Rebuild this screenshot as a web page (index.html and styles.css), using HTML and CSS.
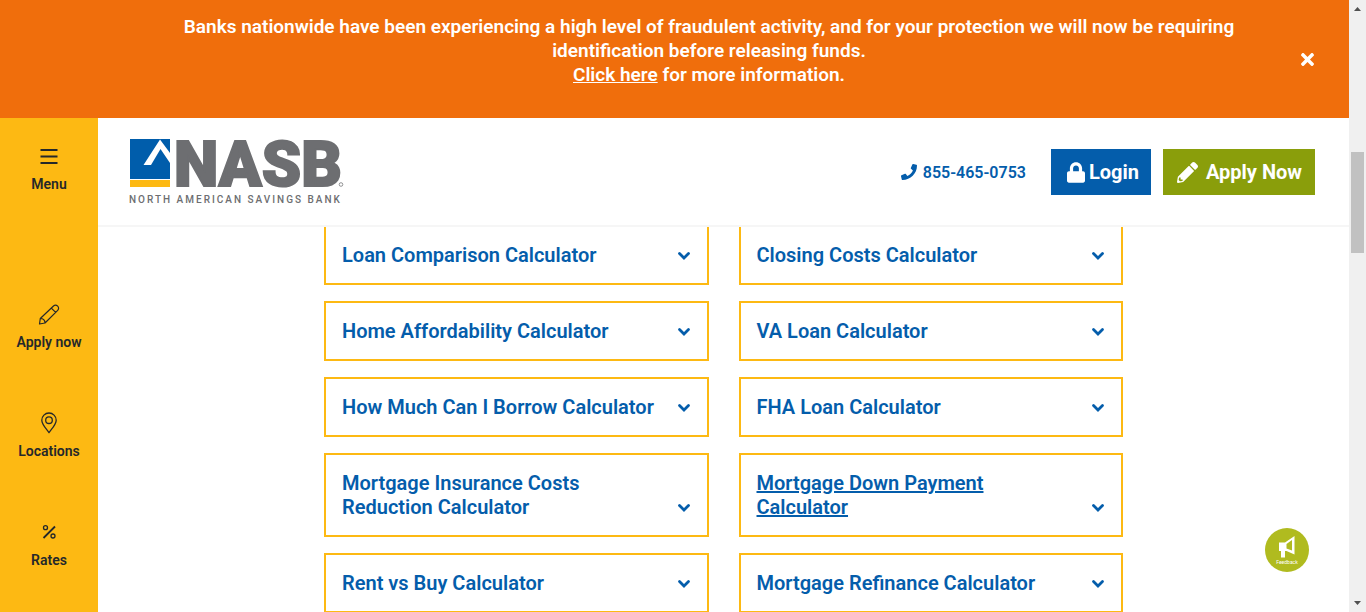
FILE: index.html
```html
<!DOCTYPE html>
<html lang="en">
<head>
<meta charset="utf-8">
<title>Mortgage Calculators | NASB</title>
<link rel="stylesheet" href="styles.css">
</head>
<body>
<svg class="sprite" aria-hidden="true">
  <symbol id="chevron" viewBox="0 0 14 10"><path d="M2.5 2.5 7 7l4.500-4.500" fill="none" stroke="currentColor" stroke-width="2.800" stroke-linecap="round" stroke-linejoin="miter"/></symbol>
</svg>
<div class="app">
  <div class="banner" role="alert">
    <p class="banner-text">Banks nationwide have been experiencing a high level of fraudulent activity, and for your protection we will now be requiring identification before releasing funds.<br><a href="#info">Click here</a> for more information.</p>
    <button class="banner-close" type="button" aria-label="Close">
      <svg width="13" height="19" viewBox="0 0 352 512" fill="currentColor"><path d="M242.720 256l100.070-100.070c12.280-12.280 12.280-32.190 0-44.480l-22.240-22.240c-12.280-12.280-32.190-12.280-44.480 0L176 189.280 75.930 89.210c-12.280-12.280-32.190-12.280-44.480 0L9.210 111.450c-12.280 12.280-12.280 32.190 0 44.480L109.280 256 9.210 356.070c-12.280 12.280-12.280 32.190 0 44.480l22.240 22.240c12.280 12.280 32.200 12.280 44.480 0L176 322.720l100.070 100.070c12.280 12.280 32.200 12.280 44.480 0l22.240-22.240c12.280-12.280 12.280-32.190 0-44.480L242.720 256z"/></svg>
    </button>
  </div>
  <div class="body">
    <nav class="sidebar" aria-label="Quick links">
      <button class="side-item side-menu" type="button">
        <svg width="24" height="24" viewBox="0 0 24 24" fill="none" stroke="currentColor" stroke-width="2"><path d="M3.500 6h17M3.500 12.500h17M3.500 19h17"/></svg>
        <span>Menu</span>
      </button>
      <a class="side-item" href="#apply">
        <svg width="24" height="24" viewBox="0 0 24 24" fill="none" stroke="currentColor" stroke-width="1.200" stroke-linejoin="round"><path d="M2.500 22l.8-5.500L16.500 4c1.200-1.100 3-1 4.200.2s1.200 2.900 0 4.100L8 21zM14.300 6.100l4.400 4.300M3.300 16.500c2.600 0 4.600 1.900 4.700 4.500"/></svg>
        <span>Apply now</span>
      </a>
      <a class="side-item" href="#locations">
        <svg width="24" height="24" viewBox="0 0 24 24" fill="none" stroke="currentColor" stroke-width="1.300"><path d="M12 21.500c-2.400-3.300-7.200-8-7.200-12.300a7.200 7.200 0 0 1 14.400 0c0 4.300-4.800 9-7.200 12.300z"/><circle cx="12" cy="9.200" r="3.300"/></svg>
        <span>Locations</span>
      </a>
      <a class="side-item" href="#rates">
        <svg width="24" height="24" viewBox="0 0 24 24" fill="none" stroke="currentColor"><path d="M6.500 18 18 6.500" stroke-width="1.800"/><circle cx="8.500" cy="7.700" r="2" stroke-width="1.300"/><circle cx="16" cy="16" r="2" stroke-width="1.300"/></svg>
        <span>Rates</span>
      </a>
    </nav>
    <div class="main">
      <header class="header">
        <a class="logo" href="#home" aria-label="NASB North American Savings Bank">
          <svg width="216" height="68" viewBox="0 0 216 68">
            <path fill="#005dab" d="M0 1h40v40H0z"/>
            <path fill="#fdb913" d="M0 42h40v7H0z"/>
            <path fill="#fff" d="M30 1.500 40 15v10L30.500 11 21 27h-7.500z"/>
            <text class="logo-name" x="44" y="48">NASB</text>
            <circle cx="211" cy="46.500" r="1.800" fill="none" stroke="#77787b" stroke-width=".8"/>
            <text class="logo-tag" x="-1" y="65">NORTH AMERICAN SAVINGS BANK</text>
          </svg>
        </a>
        <div class="actions">
          <a class="phone" href="tel:8554650753">
            <svg width="16" height="16" viewBox="0 0 512 512" fill="currentColor"><path d="M493.400 24.600l-104-24c-11.300-2.600-22.900 3.300-27.500 13.900l-48 112c-4.200 9.800-1.400 21.300 6.900 28l60.600 49.600c-36 76.700-98.900 140.500-177.200 177.200l-49.600-60.600c-6.800-8.300-18.200-11.100-28-6.900l-112 48C3.900 366.500-2 378.100.6 389.400l24 104C27.100 504.200 36.700 512 48 512c256.100 0 464-207.500 464-464 0-11.200-7.700-20.900-18.600-23.400z"/></svg>
            855-465-0753
          </a>
          <button class="btn btn-login" type="button">
            <svg width="18" height="21" viewBox="0 0 448 512" fill="currentColor"><path d="M400 224h-24v-72C376 68.200 307.800 0 224 0S72 68.200 72 152v72H48c-26.500 0-48 21.500-48 48v192c0 26.500 21.500 48 48 48h352c26.500 0 48-21.500 48-48V272c0-26.500-21.500-48-48-48zm-104 0H152v-72c0-39.700 32.300-72 72-72s72 32.300 72 72v72z"/></svg>
            Login
          </button>
          <a class="btn btn-apply" href="#apply">
            <svg width="21" height="21" viewBox="0 0 512 512" fill="currentColor"><path d="M497.900 142.100l-46.100 46.100c-4.700 4.700-12.300 4.700-17 0l-111-111c-4.700-4.700-4.700-12.300 0-17l46.100-46.100c18.700-18.700 49.100-18.700 67.900 0l60.100 60.100c18.800 18.700 18.800 49.100 0 67.900zM284.200 99.800L21.600 362.400.4 483.900c-2.900 16.400 11.400 30.600 27.800 27.800l121.500-21.300 262.600-262.600c4.700-4.700 4.700-12.300 0-17l-111-111c-4.800-4.700-12.400-4.700-17.100 0zM88 424h48v36.300l-64.500 11.300-31.100-31.100L51.700 376H88v48z"/></svg>
            Apply Now
          </a>
        </div>
      </header>
      <main class="content">
        <div class="cards">
          <button class="card" type="button"><span>Loan Comparison Calculator</span><svg><use href="#chevron"/></svg></button>
          <button class="card" type="button"><span>Closing Costs Calculator</span><svg><use href="#chevron"/></svg></button>
          <button class="card" type="button"><span>Home Affordability Calculator</span><svg><use href="#chevron"/></svg></button>
          <button class="card" type="button"><span>VA Loan Calculator</span><svg><use href="#chevron"/></svg></button>
          <button class="card" type="button"><span>How Much Can I Borrow Calculator</span><svg><use href="#chevron"/></svg></button>
          <button class="card" type="button"><span>FHA Loan Calculator</span><svg><use href="#chevron"/></svg></button>
          <button class="card" type="button"><span>Mortgage Insurance Costs Reduction Calculator</span><svg><use href="#chevron"/></svg></button>
          <button class="card card-active" type="button"><span>Mortgage Down Payment Calculator</span><svg><use href="#chevron"/></svg></button>
          <button class="card" type="button"><span>Rent vs Buy Calculator</span><svg><use href="#chevron"/></svg></button>
          <button class="card" type="button"><span>Mortgage Refinance Calculator</span><svg><use href="#chevron"/></svg></button>
        </div>
      </main>
    </div>
  </div>
</div>
<div class="scrollbar" aria-hidden="true">
  <svg width="17" height="17" viewBox="0 0 17 17"><path fill="#505050" d="M5 11l3.500-4 3.500 4z"/></svg>
  <div class="track"><div class="thumb"></div></div>
  <svg width="17" height="17" viewBox="0 0 17 17"><path fill="#505050" d="M5 6l3.500 4L12 6z"/></svg>
</div>
<button class="feedback" type="button">
  <svg width="18" height="24" viewBox="0 0 18 24"><path fill="#fff" d="M1 7.500h6L16.500 1v18.500L8.500 16H7v6.500H3V16H1z"/><path fill="#b0bb1f" d="M8.500 9l5.500-4v10.500L8.500 13.500z"/></svg>
  <span>Feedback</span>
</button>
</body>
</html>
```
FILE: styles.css
```css
* { box-sizing: border-box; }
body {
  margin: 0;
  height: 100vh;
  display: grid;
  grid-template-columns: minmax(0, 1fr) 17px;
  overflow: hidden;
  background: #fff;
  font-family: Roboto, "Liberation Sans", sans-serif;
}
button { font: inherit; border: 0; background: none; cursor: pointer; padding: 0; }
a { color: inherit; text-decoration: none; }
.sprite { display: none; }

.app { display: flex; flex-direction: column; height: 100vh; }
.banner {
  display: flex;
  align-items: center;
  background: #f06e0c;
  color: #fff;
  padding: 15px 35px 31px 117px;
}
.banner-text {
  flex: 1;
  margin: 0;
  padding: 0 56px;
  text-align: center;
  font-size: 19px;
  font-weight: 600;
  line-height: 24px;
}
.banner-text a { text-decoration: underline; }
.banner-close { display: flex; color: #fff; padding-top: 16px; }

.body { flex: 1; min-height: 0; display: flex; }
.sidebar {
  width: 98px;
  flex-shrink: 0;
  background: #fdb913;
  color: #25282a;
  display: flex;
  flex-direction: column;
  gap: 61px;
  padding-top: 26px;
}
.side-item {
  display: flex;
  flex-direction: column;
  align-items: center;
  gap: 8px;
  flex-shrink: 0;
  font-size: 14px;
  font-weight: 600;
  line-height: 16px;
  color: inherit;
}
.side-menu { margin-bottom: 49px; }

.main { flex: 1; min-width: 0; display: flex; flex-direction: column; }
.header {
  position: relative;
  z-index: 1;
  display: flex;
  justify-content: space-between;
  align-items: center;
  background: #fff;
  border-bottom: 2px solid #f6f6f6;
  padding: 20px 34px 19px 32px;
}
.logo svg { display: block; overflow: visible; }
.logo-name {
  font-family: Roboto, sans-serif;
  font-size: 63px;
  font-weight: 900;
  fill: #6d6e71;
  stroke: #6d6e71;
  stroke-width: 2px;
}
.logo-tag { font-family: Roboto, sans-serif; font-size: 10px; font-weight: 500; letter-spacing: 2px; fill: #6d6e71; }
.actions { display: flex; align-items: center; gap: 12px; }
.phone {
  display: flex;
  align-items: center;
  gap: 6px;
  margin-right: 13px;
  color: #045dab;
  font-size: 16px;
  font-weight: 600;
}
.btn {
  display: flex;
  align-items: center;
  height: 46px;
  color: #fff;
  font-size: 20px;
  font-weight: 700;
}
.btn-login { background: #045dab; gap: 4px; padding: 0 12px 0 16px; }
.btn-apply { background: #8a9e0b; gap: 8px; padding: 0 13px 0 14px; }

.content { flex: 1; min-height: 0; overflow: hidden; margin-top: -2px; padding: 0 16px; }
.cards {
  max-width: 799px;
  margin: 0 auto;
  display: grid;
  grid-template-columns: 1fr 1fr;
  gap: 16px 30px;
}
.card {
  display: flex;
  justify-content: space-between;
  align-items: flex-end;
  gap: 22px;
  padding: 16px;
  border: 2px solid #fdb913;
  background: #fff;
  color: #045dab;
  text-align: left;
  font-size: 20px;
  font-weight: 600;
  line-height: 24px;
}
.card svg { width: 14px; height: 10px; flex-shrink: 0; margin-bottom: 6px; }
.card-active span { text-decoration: underline; }

.scrollbar { display: flex; flex-direction: column; background: #f0f0f0; }
.scrollbar svg { flex-shrink: 0; }
.track { flex: 1; padding: 135px 2px 0; }
.thumb { height: 101px; background: #c1c1c1; }

.feedback {
  position: fixed;
  right: 57px;
  bottom: 40px;
  z-index: 2;
  width: 44px;
  height: 44px;
  border-radius: 50%;
  background: #b0bb1f;
  color: #fff;
  display: flex;
  flex-direction: column;
  align-items: center;
  justify-content: center;
  font-size: 5px;
  line-height: 6px;
}
```
